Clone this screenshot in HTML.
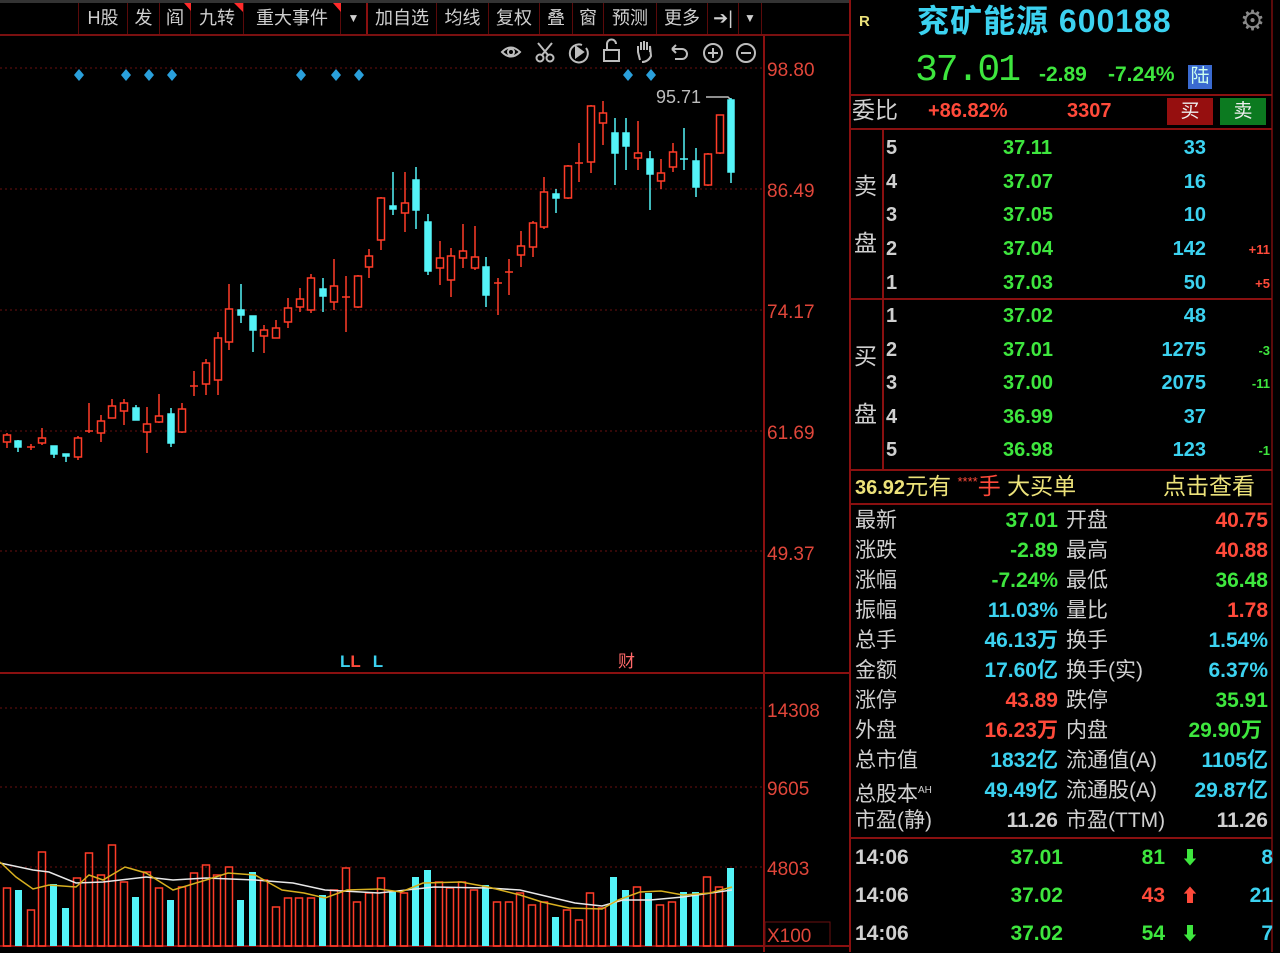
<!DOCTYPE html>
<html><head><meta charset="utf-8">
<style>
*{margin:0;padding:0;box-sizing:border-box}
body{width:1280px;height:952px;background:#000;overflow:hidden;position:relative;font-family:"Liberation Sans","Noto Sans CJK SC",sans-serif;}
.a{position:absolute;white-space:nowrap;line-height:1}
.tb{position:absolute;top:3px;height:31px;border-left:1px solid #5a0a0a;color:#cfcfcf;font-size:18px;text-align:center;line-height:31px}
.g{color:#3ee63e}.r{color:#ff4a3a}.c{color:#3cd2f0}.w{color:#d0d0d0}.y{color:#ece27a}
.n{font-weight:bold}
</style></head><body>
<!-- top bar -->
<div class="a" style="left:0;top:0;width:850px;height:3px;background:#333"></div>
<div class="a" style="left:0;top:34px;width:850px;height:2px;background:#7a1010"></div>
<div class="tb" style="left:78px;width:49px">H股</div>
<div class="tb" style="left:127px;width:32px">发</div>
<div class="tb" style="left:159px;width:31px">阎</div>
<div class="tb" style="left:190px;width:53px">九转</div>
<div class="tb" style="left:243px;width:97px">重大事件</div>
<div class="tb" style="left:340px;width:26px;font-size:12px">▼</div>
<div class="tb" style="left:366px;width:70px;border-left:2px solid #8a1010">加自选</div>
<div class="tb" style="left:436px;width:52px">均线</div>
<div class="tb" style="left:488px;width:51px">复权</div>
<div class="tb" style="left:539px;width:33px">叠</div>
<div class="tb" style="left:572px;width:31px">窗</div>
<div class="tb" style="left:603px;width:53px">预测</div>
<div class="tb" style="left:656px;width:51px">更多</div>
<div class="tb" style="left:707px;width:31px">➔|</div>
<div class="tb" style="left:738px;width:24px;font-size:12px;border-right:1px solid #5a0a0a">▼</div>
<svg class="a" style="left:0;top:0" width="850" height="70">
<polygon points="184,3 191,3 191,11" fill="#ff2a2a"/>
<polygon points="234,3 243,3 243,12" fill="#ff2a2a"/>
<polygon points="333,3 341,3 341,12" fill="#ff2a2a"/>
<g stroke="#bdbdbd" stroke-width="2" fill="none">
<path d="M502,52 Q511,43 520,52 Q511,61 502,52Z"/><circle cx="511" cy="52" r="3"/>
<circle cx="540" cy="58" r="3.5"/><circle cx="550" cy="58" r="3.5"/><path d="M538,43 L548,55 M552,43 L542,55"/>
<path d="M586,48 A9,9 0 1 1 582,45"/><polygon points="576,47 583,52 576,57" fill="#bdbdbd"/>
<rect x="604" y="50" width="15" height="11"/><path d="M607,50 V44 A4.5,4.5 0 0 1 616,44"/>
<path d="M640,60 L638,52 L638,46 M641,50 V42 M644,50 V41 M647,50 V42 M650,52 V46 L651,56 Q648,62 642,62"/>
<path d="M672,49 H682 A5,5 0 0 1 682,59 H675 M672,49 L676,45 M672,49 L676,53"/>
<circle cx="713" cy="53" r="9"/><path d="M708,53 H718 M713,48 V58"/>
<circle cx="746" cy="53" r="9"/><path d="M741,53 H751"/>
</g>
</svg>
<!-- chart svg -->
<svg class="a" style="left:0;top:36px" width="850" height="916" viewBox="0 36 850 916">
<g stroke="#6a1010" stroke-width="1" stroke-dasharray="2,3">
<line x1="0" y1="68" x2="765" y2="68"/><line x1="0" y1="189" x2="765" y2="189"/><line x1="0" y1="310" x2="765" y2="310"/><line x1="0" y1="431" x2="765" y2="431"/><line x1="0" y1="551" x2="765" y2="551"/>
<line x1="0" y1="708" x2="765" y2="708"/><line x1="0" y1="787" x2="765" y2="787"/><line x1="0" y1="867" x2="765" y2="867"/>
</g>
<line x1="764" y1="36" x2="764" y2="952" stroke="#8a1010" stroke-width="2"/>
<line x1="0" y1="673" x2="850" y2="673" stroke="#8a1010" stroke-width="2"/>
<line x1="0" y1="946" x2="850" y2="946" stroke="#8a1010" stroke-width="2"/>
<rect x="765" y="922" width="65" height="24" fill="none" stroke="#6a1010"/>
<g fill="#e0463a" font-size="19" font-family="Liberation Sans">
<text x="767" y="76">98.80</text><text x="767" y="197">86.49</text><text x="767" y="318">74.17</text><text x="767" y="439">61.69</text><text x="767" y="560">49.37</text>
<text x="767" y="717">14308</text><text x="767" y="795">9605</text><text x="767" y="875">4803</text><text x="767" y="942">X100</text>
</g>
<g fill="#2aa0dc">
<path d="M79,69 l5,6 -5,6 -5,-6Z"/><path d="M126,69 l5,6 -5,6 -5,-6Z"/><path d="M149,69 l5,6 -5,6 -5,-6Z"/><path d="M172,69 l5,6 -5,6 -5,-6Z"/><path d="M301,69 l5,6 -5,6 -5,-6Z"/><path d="M336,69 l5,6 -5,6 -5,-6Z"/><path d="M359,69 l5,6 -5,6 -5,-6Z"/><path d="M628,69 l5,6 -5,6 -5,-6Z"/><path d="M651,69 l5,6 -5,6 -5,-6Z"/>
</g>
<text x="656" y="103" fill="#bdbdbd" font-size="18" font-family="Liberation Sans">95.71</text>
<path d="M706,97 H728 L731,100" stroke="#bdbdbd" fill="none" stroke-width="1.5"/>
<text x="340" y="667" font-size="17" font-family="Liberation Sans" font-weight="bold"><tspan fill="#3cd2f0">L</tspan><tspan fill="#ff4a3a">L</tspan><tspan fill="#3cd2f0" dx="12">L</tspan></text>
<text x="618" y="667" font-size="17" fill="#ff6a6a">财</text>
<!-- candles -->
<g stroke="#ff3c28" stroke-width="1.5" fill="#000">
<line x1="7" y1="433" x2="7" y2="448"/><rect x="3.5" y="435" width="7" height="7"/>
<line x1="31" y1="444" x2="31" y2="450"/><line x1="27" y1="447" x2="35" y2="447"/>
<line x1="42" y1="428" x2="42" y2="445"/><rect x="38.5" y="438" width="7" height="5"/>
<line x1="78" y1="436" x2="78" y2="460"/><rect x="74.5" y="438" width="7" height="19"/>
<line x1="89" y1="403" x2="89" y2="433"/><line x1="85" y1="431" x2="93" y2="431"/>
<line x1="101" y1="415" x2="101" y2="442"/><rect x="97.5" y="421" width="7" height="12"/>
<line x1="112" y1="399" x2="112" y2="418"/><rect x="108.5" y="406" width="7" height="12"/>
<line x1="124" y1="399" x2="124" y2="425"/><rect x="120.5" y="403" width="7" height="8"/>
<line x1="147" y1="407" x2="147" y2="453"/><rect x="143.5" y="424" width="7" height="8"/>
<line x1="159" y1="394" x2="159" y2="423"/><rect x="155.5" y="416" width="7" height="6"/>
<line x1="182" y1="403" x2="182" y2="433"/><rect x="178.5" y="409" width="7" height="23"/>
<line x1="194" y1="371" x2="194" y2="396"/><line x1="190" y1="386" x2="198" y2="386"/>
<line x1="206" y1="359" x2="206" y2="395"/><rect x="202.5" y="363" width="7" height="21"/>
<line x1="218" y1="332" x2="218" y2="395"/><rect x="214.5" y="338" width="7" height="42"/>
<line x1="229" y1="284" x2="229" y2="350"/><rect x="225.5" y="309" width="7" height="33"/>
<line x1="264" y1="325" x2="264" y2="353"/><rect x="260.5" y="330" width="7" height="6"/>
<line x1="276" y1="320" x2="276" y2="338"/><rect x="272.5" y="328" width="7" height="10"/>
<line x1="288" y1="298" x2="288" y2="328"/><rect x="284.5" y="308" width="7" height="14"/>
<line x1="300" y1="288" x2="300" y2="312"/><rect x="296.5" y="299" width="7" height="8"/>
<line x1="311" y1="274" x2="311" y2="313"/><rect x="307.5" y="278" width="7" height="32"/>
<line x1="334" y1="259" x2="334" y2="310"/><rect x="330.5" y="286" width="7" height="16"/>
<line x1="346" y1="276" x2="346" y2="332"/><line x1="342" y1="297" x2="350" y2="297"/>
<line x1="358" y1="275" x2="358" y2="308"/><rect x="354.5" y="276" width="7" height="31"/>
<line x1="369" y1="249" x2="369" y2="278"/><rect x="365.5" y="256" width="7" height="11"/>
<line x1="381" y1="197" x2="381" y2="250"/><rect x="377.5" y="198" width="7" height="42"/>
<line x1="405" y1="172" x2="405" y2="232"/><rect x="401.5" y="203" width="7" height="10"/>
<line x1="440" y1="241" x2="440" y2="285"/><rect x="436.5" y="258" width="7" height="10"/>
<line x1="451" y1="248" x2="451" y2="297"/><rect x="447.5" y="256" width="7" height="24"/>
<line x1="463" y1="224" x2="463" y2="268"/><rect x="459.5" y="251" width="7" height="7"/>
<line x1="475" y1="226" x2="475" y2="270"/><rect x="471.5" y="257" width="7" height="11"/>
<line x1="498" y1="278" x2="498" y2="315"/><line x1="494" y1="283" x2="502" y2="283"/>
<line x1="509" y1="259" x2="509" y2="295"/><line x1="505" y1="272" x2="513" y2="272"/>
<line x1="521" y1="231" x2="521" y2="267"/><rect x="517.5" y="246" width="7" height="9"/>
<line x1="533" y1="221" x2="533" y2="257"/><rect x="529.5" y="223" width="7" height="24"/>
<line x1="544" y1="177" x2="544" y2="229"/><rect x="540.5" y="192" width="7" height="35"/>
<line x1="568" y1="165" x2="568" y2="199"/><rect x="564.5" y="166" width="7" height="32"/>
<line x1="579" y1="143" x2="579" y2="182"/><line x1="575" y1="163" x2="583" y2="163"/>
<line x1="591" y1="105" x2="591" y2="173"/><rect x="587.5" y="106" width="7" height="56"/>
<line x1="603" y1="101" x2="603" y2="145"/><rect x="599.5" y="113" width="7" height="10"/>
<line x1="638" y1="121" x2="638" y2="170"/><rect x="634.5" y="153" width="7" height="5"/>
<line x1="661" y1="159" x2="661" y2="189"/><rect x="657.5" y="173" width="7" height="8"/>
<line x1="673" y1="143" x2="673" y2="172"/><rect x="669.5" y="152" width="7" height="15"/>
<line x1="708" y1="153" x2="708" y2="186"/><rect x="704.5" y="154" width="7" height="31"/>
<line x1="720" y1="115" x2="720" y2="154"/><rect x="716.5" y="115" width="7" height="38"/>
</g>
<g stroke="#54f4f8" stroke-width="1.5" fill="#54f4f8">
<line x1="18" y1="440" x2="18" y2="452"/><rect x="15" y="441" width="6" height="6"/>
<line x1="54" y1="446" x2="54" y2="458"/><rect x="51" y="446" width="6" height="8"/>
<line x1="66" y1="454" x2="66" y2="462"/><rect x="63" y="454" width="6" height="2"/>
<line x1="136" y1="405" x2="136" y2="420"/><rect x="133" y="408" width="6" height="12"/>
<line x1="171" y1="408" x2="171" y2="447"/><rect x="168" y="414" width="6" height="29"/>
<line x1="241" y1="284" x2="241" y2="323"/><rect x="238" y="310" width="6" height="5"/>
<line x1="253" y1="316" x2="253" y2="352"/><rect x="250" y="316" width="6" height="14"/>
<line x1="323" y1="278" x2="323" y2="312"/><rect x="320" y="289" width="6" height="7"/>
<line x1="393" y1="172" x2="393" y2="215"/><rect x="390" y="206" width="6" height="3"/>
<line x1="416" y1="167" x2="416" y2="229"/><rect x="413" y="180" width="6" height="30"/>
<line x1="428" y1="214" x2="428" y2="275"/><rect x="425" y="222" width="6" height="49"/>
<line x1="486" y1="257" x2="486" y2="307"/><rect x="483" y="267" width="6" height="28"/>
<line x1="556" y1="189" x2="556" y2="213"/><rect x="553" y="194" width="6" height="4"/>
<line x1="615" y1="118" x2="615" y2="185"/><rect x="612" y="133" width="6" height="20"/>
<line x1="626" y1="118" x2="626" y2="170"/><rect x="623" y="133" width="6" height="13"/>
<line x1="650" y1="151" x2="650" y2="210"/><rect x="647" y="159" width="6" height="15"/>
<line x1="684" y1="128" x2="684" y2="170"/><line x1="680" y1="159" x2="688" y2="159"/>
<line x1="696" y1="148" x2="696" y2="197"/><rect x="693" y="161" width="6" height="26"/>
<line x1="731" y1="98" x2="731" y2="183"/><rect x="728" y="100" width="6" height="72"/>
</g>
<!-- volume -->
<g stroke="#ff3c28" stroke-width="1.5" fill="none">
<rect x="3.5" y="888" width="7" height="58"/><rect x="27.5" y="910" width="7" height="36"/><rect x="38.5" y="852" width="7" height="94"/>
<rect x="73.5" y="878" width="7" height="68"/><rect x="85.5" y="853" width="7" height="93"/><rect x="97.5" y="875" width="7" height="71"/><rect x="108.5" y="845" width="7" height="101"/><rect x="120.5" y="882" width="7" height="64"/>
<rect x="143.5" y="872" width="7" height="74"/><rect x="155.5" y="888" width="7" height="58"/><rect x="178.5" y="887" width="7" height="59"/><rect x="190.5" y="873" width="7" height="73"/><rect x="202.5" y="865" width="7" height="81"/><rect x="213.5" y="875" width="7" height="71"/><rect x="225.5" y="867" width="7" height="79"/>
<rect x="260.5" y="880" width="7" height="66"/><rect x="272.5" y="907" width="7" height="39"/><rect x="284.5" y="898" width="7" height="48"/><rect x="295.5" y="898" width="7" height="48"/><rect x="307.5" y="898" width="7" height="48"/>
<rect x="330.5" y="890" width="7" height="56"/><rect x="342.5" y="868" width="7" height="78"/><rect x="353.5" y="902" width="7" height="44"/><rect x="365.5" y="893" width="7" height="53"/><rect x="377.5" y="878" width="7" height="68"/><rect x="400.5" y="893" width="7" height="53"/>
<rect x="435.5" y="882" width="7" height="64"/><rect x="446.5" y="888" width="7" height="58"/><rect x="458.5" y="882" width="7" height="64"/><rect x="470.5" y="890" width="7" height="56"/>
<rect x="493.5" y="902" width="7" height="44"/><rect x="505.5" y="902" width="7" height="44"/><rect x="516.5" y="893" width="7" height="53"/><rect x="528.5" y="905" width="7" height="41"/><rect x="540.5" y="902" width="7" height="44"/>
<rect x="563.5" y="910" width="7" height="36"/><rect x="575.5" y="920" width="7" height="26"/><rect x="586.5" y="893" width="7" height="53"/><rect x="598.5" y="908" width="7" height="38"/>
<rect x="633.5" y="887" width="7" height="59"/><rect x="656.5" y="905" width="7" height="41"/><rect x="668.5" y="902" width="7" height="44"/>
<rect x="703.5" y="877" width="7" height="69"/><rect x="715.5" y="887" width="7" height="59"/>
</g>
<g fill="#54f4f8">
<rect x="15" y="890" width="7" height="56"/><rect x="50" y="884" width="7" height="62"/><rect x="62" y="908" width="7" height="38"/>
<rect x="132" y="897" width="7" height="49"/><rect x="167" y="900" width="7" height="46"/><rect x="237" y="900" width="7" height="46"/><rect x="249" y="872" width="7" height="74"/>
<rect x="319" y="895" width="7" height="51"/><rect x="389" y="892" width="7" height="54"/><rect x="412" y="877" width="7" height="69"/><rect x="424" y="870" width="7" height="76"/>
<rect x="482" y="885" width="7" height="61"/><rect x="552" y="917" width="7" height="29"/><rect x="610" y="877" width="7" height="69"/><rect x="622" y="890" width="7" height="56"/>
<rect x="645" y="893" width="7" height="53"/><rect x="680" y="892" width="7" height="54"/><rect x="692" y="892" width="7" height="54"/><rect x="727" y="868" width="7" height="78"/>
</g>
<polyline fill="none" stroke="#e8e8e8" stroke-width="1.5" points="0,863 33,870 49,872 76,883 103,882 146,877 173,880 206,878 255,880 293,883 325,890 379,893 434,887 488,888 520,890 575,903 602,906 623,900 650,900 683,897 732,890"/>
<polyline fill="none" stroke="#d8b020" stroke-width="1.5" points="0,862 16,877 33,889 49,885 76,887 89,875 103,880 125,867 146,873 173,890 206,880 228,873 255,875 282,890 304,893 325,898 347,890 379,889 401,892 423,883 461,882 488,887 520,895 542,902 569,908 602,909 618,900 640,892 661,891 683,895 710,893 732,887"/>
</svg>
<!-- right panel -->
<div class="a" style="left:849px;top:0;width:2px;height:952px;background:#8a1010"></div>
<div class="a" style="left:1271px;top:0;width:2px;height:952px;background:#5a0a0a"></div>
<div class="a" style="left:851px;top:94px;width:421px;height:2px;background:#8a1010"></div>
<div class="a" style="left:851px;top:128px;width:421px;height:2px;background:#8a1010"></div>
<div class="a" style="left:851px;top:298px;width:421px;height:2px;background:#8a1010"></div>
<div class="a" style="left:851px;top:469px;width:421px;height:2px;background:#8a1010"></div>
<div class="a" style="left:851px;top:503px;width:421px;height:2px;background:#8a1010"></div>
<div class="a" style="left:851px;top:837px;width:421px;height:2px;background:#8a1010"></div>
<div class="a" style="left:882px;top:130px;width:2px;height:339px;background:#8a1010"></div>
<div class="a y" style="left:859px;top:14px;font-size:15px;font-weight:bold">R</div>
<div class="a c" style="left:917px;top:5px;font-size:32px;font-weight:bold;letter-spacing:1px">兖矿能源 600188</div>
<div class="a" style="left:1240px;top:7px;font-size:28px;color:#888">⚙</div>
<div class="a g" style="left:915px;top:52px;font-size:38px;font-family:'Liberation Mono',monospace;letter-spacing:-2px">37.01</div>
<div class="a g n" style="left:1039px;top:64px;font-size:21px">-2.89</div>
<div class="a g n" style="left:1108px;top:64px;font-size:21px">-7.24%</div>
<div class="a" style="left:1188px;top:65px;width:24px;height:24px;background:#3a6ad0;color:#cfe;font-size:19px;text-align:center;line-height:24px">陆</div>
<div class="a w" style="left:852px;top:99px;font-size:23px">委比</div>
<div class="a r n" style="left:928px;top:101px;font-size:20px">+86.82%</div>
<div class="a r n" style="left:1067px;top:101px;font-size:20px">3307</div>
<div class="a" style="left:1167px;top:98px;width:46px;height:27px;background:#960f0f;color:#eee;font-size:19px;text-align:center;line-height:27px">买</div>
<div class="a" style="left:1220px;top:98px;width:46px;height:27px;background:#0c7a20;color:#eee;font-size:19px;text-align:center;line-height:27px">卖</div>
<div class="a w" style="left:854px;top:175px;font-size:23px">卖</div>
<div class="a w" style="left:854px;top:232px;font-size:23px">盘</div>
<div class="a w" style="left:854px;top:345px;font-size:23px">买</div>
<div class="a w" style="left:854px;top:403px;font-size:23px">盘</div>
<div class="a n" style="left:886px;top:132px;width:386px;font-size:20px;line-height:33.7px">
<div style="position:relative;height:33.7px"><span class="w">5</span><span class="g" style="position:absolute;left:117px">37.11</span><span class="c" style="position:absolute;right:66px">33</span></div>
<div style="position:relative;height:33.7px"><span class="w">4</span><span class="g" style="position:absolute;left:117px">37.07</span><span class="c" style="position:absolute;right:66px">16</span></div>
<div style="position:relative;height:33.7px"><span class="w">3</span><span class="g" style="position:absolute;left:117px">37.05</span><span class="c" style="position:absolute;right:66px">10</span></div>
<div style="position:relative;height:33.7px"><span class="w">2</span><span class="g" style="position:absolute;left:117px">37.04</span><span class="c" style="position:absolute;right:66px">142</span><span class="r" style="position:absolute;right:2px;font-size:13px">+11</span></div>
<div style="position:relative;height:33.7px"><span class="w">1</span><span class="g" style="position:absolute;left:117px">37.03</span><span class="c" style="position:absolute;right:66px">50</span><span class="r" style="position:absolute;right:2px;font-size:13px">+5</span></div>
</div>
<div class="a n" style="left:886px;top:300px;width:386px;font-size:20px;line-height:33.5px">
<div style="position:relative;height:33.5px"><span class="w">1</span><span class="g" style="position:absolute;left:117px">37.02</span><span class="c" style="position:absolute;right:66px">48</span></div>
<div style="position:relative;height:33.5px"><span class="w">2</span><span class="g" style="position:absolute;left:117px">37.01</span><span class="c" style="position:absolute;right:66px">1275</span><span class="g" style="position:absolute;right:2px;font-size:13px">-3</span></div>
<div style="position:relative;height:33.5px"><span class="w">3</span><span class="g" style="position:absolute;left:117px">37.00</span><span class="c" style="position:absolute;right:66px">2075</span><span class="g" style="position:absolute;right:2px;font-size:13px">-11</span></div>
<div style="position:relative;height:33.5px"><span class="w">4</span><span class="g" style="position:absolute;left:117px">36.99</span><span class="c" style="position:absolute;right:66px">37</span></div>
<div style="position:relative;height:33.5px"><span class="w">5</span><span class="g" style="position:absolute;left:117px">36.98</span><span class="c" style="position:absolute;right:66px">123</span><span class="g" style="position:absolute;right:2px;font-size:13px">-1</span></div>
</div>
<div class="a y" style="left:855px;top:475px;font-size:23px"><b style="font-size:20px">36.92</b>元有 <span class="r" style="font-size:13px;vertical-align:top">****</span><span class="r">手</span> 大买单</div>
<div class="a y" style="left:1163px;top:475px;font-size:23px">点击查看</div>
<div class="a" style="left:855px;top:506px;width:416px;font-size:21px;line-height:30px">
<div style="position:relative;height:30px"><span class="w">最新</span><span class="g n" style="position:absolute;right:213px">37.01</span><span class="w" style="position:absolute;left:211px">开盘</span><span class="r n" style="position:absolute;right:3px">40.75</span></div>
<div style="position:relative;height:30px"><span class="w">涨跌</span><span class="g n" style="position:absolute;right:213px">-2.89</span><span class="w" style="position:absolute;left:211px">最高</span><span class="r n" style="position:absolute;right:3px">40.88</span></div>
<div style="position:relative;height:30px"><span class="w">涨幅</span><span class="g n" style="position:absolute;right:213px">-7.24%</span><span class="w" style="position:absolute;left:211px">最低</span><span class="g n" style="position:absolute;right:3px">36.48</span></div>
<div style="position:relative;height:30px"><span class="w">振幅</span><span class="c n" style="position:absolute;right:213px">11.03%</span><span class="w" style="position:absolute;left:211px">量比</span><span class="r n" style="position:absolute;right:3px">1.78</span></div>
<div style="position:relative;height:30px"><span class="w">总手</span><span class="c n" style="position:absolute;right:213px">46.13万</span><span class="w" style="position:absolute;left:211px">换手</span><span class="c n" style="position:absolute;right:3px">1.54%</span></div>
<div style="position:relative;height:30px"><span class="w">金额</span><span class="c n" style="position:absolute;right:213px">17.60亿</span><span class="w" style="position:absolute;left:211px">换手(实)</span><span class="c n" style="position:absolute;right:3px">6.37%</span></div>
<div style="position:relative;height:30px"><span class="w">涨停</span><span class="r n" style="position:absolute;right:213px">43.89</span><span class="w" style="position:absolute;left:211px">跌停</span><span class="g n" style="position:absolute;right:3px">35.91</span></div>
<div style="position:relative;height:30px"><span class="w">外盘</span><span class="r n" style="position:absolute;right:213px">16.23万</span><span class="w" style="position:absolute;left:211px">内盘</span><span class="g n" style="position:absolute;right:9px">29.90万</span></div>
<div style="position:relative;height:30px"><span class="w">总市值</span><span class="c n" style="position:absolute;right:213px">1832亿</span><span class="w" style="position:absolute;left:211px">流通值(A)</span><span class="c n" style="position:absolute;right:3px">1105亿</span></div>
<div style="position:relative;height:30px"><span class="w">总股本<sup style="font-size:10px">AH</sup></span><span class="c n" style="position:absolute;right:213px">49.49亿</span><span class="w" style="position:absolute;left:211px">流通股(A)</span><span class="c n" style="position:absolute;right:3px">29.87亿</span></div>
<div style="position:relative;height:30px"><span class="w">市盈(静)</span><span class="w n" style="position:absolute;right:213px">11.26</span><span class="w" style="position:absolute;left:211px">市盈(TTM)</span><span class="w n" style="position:absolute;right:3px">11.26</span></div>
</div>
<div class="a n" style="left:855px;top:839px;width:418px;font-size:21px;line-height:38px">
<div style="position:relative;height:38px"><span class="w">14:06</span><span class="g" style="position:absolute;right:210px">37.01</span><span class="g" style="position:absolute;right:108px">81</span><span class="g" style="position:absolute;left:326px;font-size:18px">⬇</span><span class="c" style="position:absolute;right:0">8</span></div>
<div style="position:relative;height:38px"><span class="w">14:06</span><span class="g" style="position:absolute;right:210px">37.02</span><span class="r" style="position:absolute;right:108px">43</span><span class="r" style="position:absolute;left:326px;font-size:18px">⬆</span><span class="c" style="position:absolute;right:0">21</span></div>
<div style="position:relative;height:38px"><span class="w">14:06</span><span class="g" style="position:absolute;right:210px">37.02</span><span class="g" style="position:absolute;right:108px">54</span><span class="g" style="position:absolute;left:326px;font-size:18px">⬇</span><span class="c" style="position:absolute;right:0">7</span></div>
</div>
</body></html>
